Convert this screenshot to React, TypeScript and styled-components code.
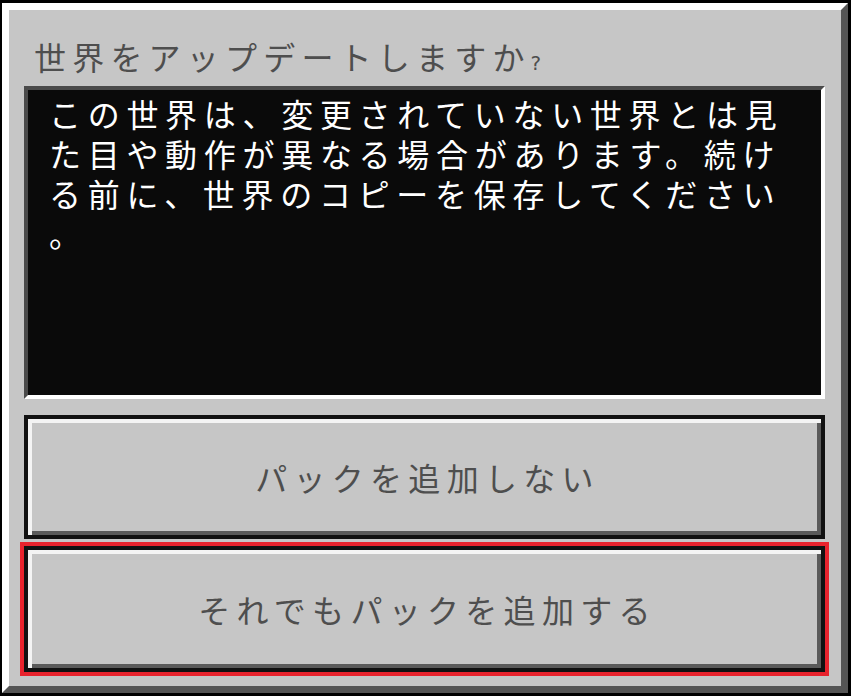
import React from 'react';
import styled, { createGlobalStyle } from 'styled-components';

const GlobalStyle = createGlobalStyle`
  html, body {
    margin: 0;
    padding: 0;
    background: #000;
  }
  body {
    font-family: "Noto Sans CJK JP", "Noto Sans", sans-serif;
  }
`;

const Frame = styled.div`
  width: 851px;
  height: 696px;
  box-sizing: border-box;
  border: 3px solid #000;
  border-left-width: 2px;
  background: #c6c6c6;
`;

const Panel = styled.div`
  height: 100%;
  box-sizing: border-box;
  border-style: solid;
  border-width: 7px;
  border-color: #ffffff #555555 #555555 #ffffff;
  background: #c6c6c6;
  padding: 26px 16px 0 15px;
  display: flex;
  flex-direction: column;
`;

const Title = styled.h1`
  height: 40px;
  flex: none;
  margin: 0 0 10px 10px;
  font-size: 32px;
  font-weight: 400;
  line-height: 40px;
  letter-spacing: 6.2px;
  color: #4e4e4e;
  white-space: nowrap;
  overflow: visible;
`;

const Question = styled.span`
  font-size: 20px;
  line-height: 20px;
  letter-spacing: 0;
  font-family: "DejaVu Sans", sans-serif;
`;

const MessageBox = styled.div`
  height: 313px;
  flex: none;
  box-sizing: border-box;
  border-style: solid;
  border-width: 4px;
  border-color: #4a4a4a #ffffff #ffffff #4a4a4a;
  background: #0a0a0a;
  padding: 3px 18px 0 21px;
`;

const Message = styled.p`
  margin: 0;
  color: #ffffff;
  font-size: 32px;
  line-height: 40px;
  letter-spacing: 6.7px;
  line-break: anywhere;
`;

const Button = styled.button<{ $focused?: boolean }>`
  display: flex;
  flex: none;
  align-items: center;
  justify-content: center;
  width: 100%;
  height: ${({ $focused }) => ($focused ? '126px' : '124px')};
  margin-top: ${({ $focused }) => ($focused ? '7px' : '16px')};
  box-sizing: border-box;
  padding: 0 0 0 6px;
  border: 4px solid #111;
  background: #c6c6c6;
  box-shadow: inset 4px 4px 0 #f4f4f4, inset -4px -4px 0 #5a5a5a
    ${({ $focused }) => ($focused ? ', 0 0 0 4px #e8232d' : '')};
  font-family: "Noto Sans CJK JP", "Noto Sans", sans-serif;
  font-size: 32px;
  font-weight: 400;
  letter-spacing: 6.3px;
  color: #4e4e4e;
  cursor: pointer;
`;

const App: React.FC = () => {
  return (
    <>
      <GlobalStyle />
      <Frame>
        <Panel>
          <Title>
            世界をアップデートしますか<Question>?</Question>
          </Title>
          <MessageBox>
            <Message>
              この世界は、変更されていない世界とは見た目や動作が異なる場合があります。続ける前に、世界のコピーを保存してください。
            </Message>
          </MessageBox>
          <Button>パックを追加しない</Button>
          <Button $focused>それでもパックを追加する</Button>
        </Panel>
      </Frame>
    </>
  );
};

export default App;
